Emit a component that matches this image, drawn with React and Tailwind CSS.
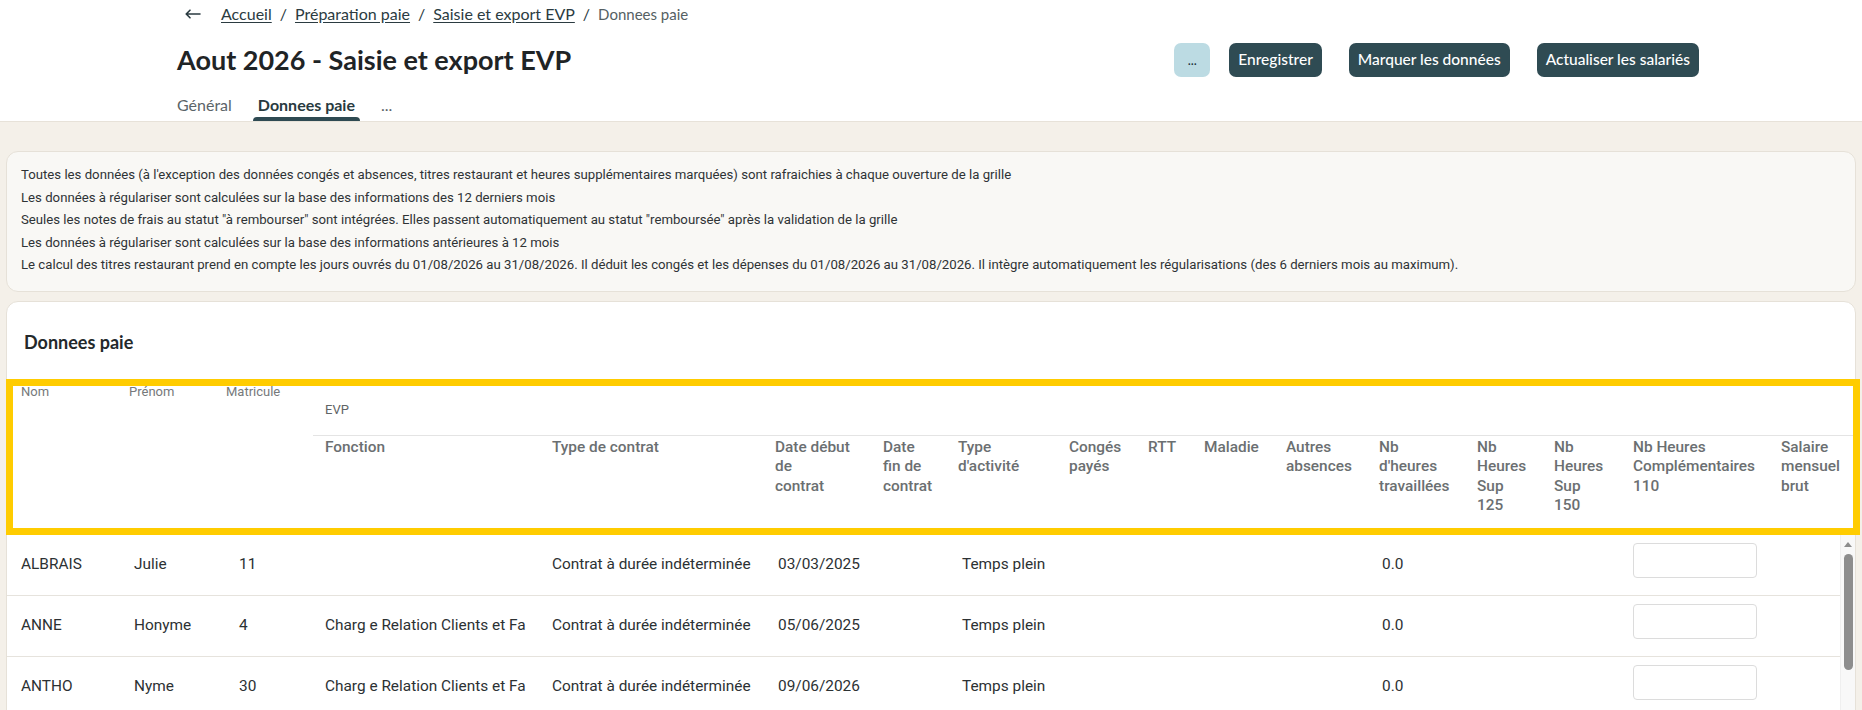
import { useState } from "react";

const infoLines = [
  "Toutes les données (à l'exception des données congés et absences, titres restaurant et heures supplémentaires marquées) sont rafraichies à chaque ouverture de la grille",
  "Les données à régulariser sont calculées sur la base des informations des 12 derniers mois",
  "Seules les notes de frais au statut \"à rembourser\" sont intégrées. Elles passent automatiquement au statut \"remboursée\" après la validation de la grille",
  "Les données à régulariser sont calculées sur la base des informations antérieures à 12 mois",
  "Le calcul des titres restaurant prend en compte les jours ouvrés du 01/08/2026 au 31/08/2026. Il déduit les congés et les dépenses du 01/08/2026 au 31/08/2026. Il intègre automatiquement les régularisations (des 6 derniers mois au maximum).",
];

// evp columns, widths taken from the grid
const evpColumns = [
  { key: "fonction", width: "w-[227px]", lines: ["Fonction"] },
  { key: "contrat", width: "w-[223px]", lines: ["Type de contrat"] },
  { key: "debut", width: "w-[108px]", lines: ["Date début", "de", "contrat"] },
  { key: "fin", width: "w-[75px]", lines: ["Date", "fin de", "contrat"] },
  { key: "activite", width: "w-[111px]", lines: ["Type", "d'activité"] },
  { key: "conges", width: "w-[79px]", lines: ["Congés", "payés"] },
  { key: "rtt", width: "w-[56px]", lines: ["RTT"] },
  { key: "maladie", width: "w-[82px]", lines: ["Maladie"] },
  { key: "autres", width: "w-[93px]", lines: ["Autres", "absences"] },
  { key: "heures", width: "w-[98px]", lines: ["Nb", "d'heures", "travaillées"] },
  { key: "sup125", width: "w-[77px]", lines: ["Nb", "Heures", "Sup", "125"] },
  { key: "sup150", width: "w-[79px]", lines: ["Nb", "Heures", "Sup", "150"] },
  { key: "compl", width: "w-[148px]", lines: ["Nb Heures", "Complémentaires", "110"] },
  { key: "salaire", width: "flex-1", lines: ["Salaire", "mensuel", "brut"] },
];

// fonction is shown cut by the column, as in the grid
const employees = [
  { nom: "ALBRAIS", prenom: "Julie", matricule: "11", fonction: "", debut: "03/03/2025" },
  { nom: "ANNE", prenom: "Honyme", matricule: "4", fonction: "Charg e Relation Clients et Fa", debut: "05/06/2025" },
  { nom: "ANTHO", prenom: "Nyme", matricule: "30", fonction: "Charg e Relation Clients et Fa", debut: "09/06/2026" },
];

function Breadcrumb() {
  return (
    <div className="flex h-[20px] items-center pl-[185px] text-[16px] leading-[20px] text-[#2b3b41]">
      <svg width="16" height="10" viewBox="0 0 16 10" fill="none" stroke="#2b3b41" strokeWidth="1.6" strokeLinecap="round" strokeLinejoin="round">
        <path d="M15 5H1.5M5 1.2L1.2 5 5 8.8" />
      </svg>
      <a className="ml-[20px] underline underline-offset-2">Accueil</a>
      <span className="mx-[8px]">/</span>
      <a className="underline underline-offset-2">Préparation paie</a>
      <span className="mx-[8px]">/</span>
      <a className="underline underline-offset-2">Saisie et export EVP</a>
      <span className="mx-[8px]">/</span>
      <span className="text-[15px] text-[#555f63]">Donnees paie</span>
    </div>
  );
}

function Tabs() {
  const [active, setActive] = useState("paie");
  const tabs = [
    { key: "general", label: "Général" },
    { key: "paie", label: "Donnees paie" },
    { key: "more", label: "..." },
  ];
  return (
    <div className="ml-[172px] mt-[17px] flex gap-[16px]">
      {tabs.map((tab) => (
        <button
          key={tab.key}
          type="button"
          onClick={() => setActive(tab.key)}
          className="flex flex-col gap-[1px]"
        >
          <span
            className={
              active === tab.key
                ? "px-[5px] text-[16px] font-bold leading-[22px] text-[#283a40]"
                : "px-[5px] text-[16px] leading-[22px] text-[#5b6468]"
            }
          >
            {tab.label}
          </span>
          <span
            className={
              active === tab.key
                ? "h-[4px] w-full rounded-t-[4px] bg-[#2e4a52]"
                : "h-[4px] w-full"
            }
          />
        </button>
      ))}
    </div>
  );
}

function PageHeader() {
  return (
    <div className="border-b border-[#e7e2d9] bg-white pt-[4px] font-['Lato',sans-serif]">
      <Breadcrumb />
      <div className="mt-[19px] flex h-[34px] items-center justify-between pl-[177px] pr-[163px]">
        <h1 className="text-[27px] font-bold leading-[34px] text-[#1f2426]">Aout 2026 - Saisie et export EVP</h1>
        <div className="flex items-center">
          <button type="button" className="h-[34px] w-[36px] rounded-[7px] bg-[#bcdbe3] text-[13px] leading-none text-[#203036]">
            ...
          </button>
          <button type="button" className="ml-[19px] h-[34px] rounded-[7px] bg-[#2f4b53] px-[9px] text-[15.5px] font-medium text-white">
            Enregistrer
          </button>
          <button type="button" className="ml-[27px] h-[34px] rounded-[7px] bg-[#2f4b53] px-[9px] text-[15.5px] font-medium text-white">
            Marquer les données
          </button>
          <button type="button" className="ml-[27px] h-[34px] rounded-[7px] bg-[#2f4b53] px-[9px] text-[15.5px] font-medium text-white">
            Actualiser les salariés
          </button>
        </div>
      </div>
      <Tabs />
    </div>
  );
}

function InfoBox() {
  return (
    <div className="rounded-[12px] border border-[#e6e1d8] bg-[#f9f8f5] pb-[14px] pl-[14px] pt-[12px] font-['Roboto',sans-serif] text-[13.2px] leading-[22.5px] text-[#2f3335]">
      {infoLines.map((line) => (
        <p key={line}>{line}</p>
      ))}
    </div>
  );
}

function TableHeader() {
  return (
    <div className="relative flex h-[156px]">
      <div className="w-[106px] pl-[14px] pt-[5px] text-[13px] leading-[16px] text-[#76797b]">Nom</div>
      <div className="w-[97px] pl-[16px] pt-[5px] text-[13px] leading-[16px] text-[#76797b]">Prénom</div>
      <div className="w-[103px] pl-[16px] pt-[5px] text-[13px] leading-[16px] text-[#76797b]">Matricule</div>
      <div className="flex flex-1 flex-col">
        <div className="h-[57px] border-b border-[#e4e4e4] pl-[12px] pt-[23px] text-[13px] leading-[16px] text-[#5f6466]">EVP</div>
        <div className="flex">
          {evpColumns.map((col) => (
            <div key={col.key} className={`${col.width} px-[12px] pt-[2px] text-[15.4px] font-medium leading-[19.5px] text-[#6b6f71]`}>
              {col.lines.map((line) => (
                <div key={line} className="whitespace-nowrap">
                  {line}
                </div>
              ))}
            </div>
          ))}
        </div>
      </div>
      <div className="pointer-events-none absolute bottom-0 left-[-1px] right-[-5px] top-0 border-[7px] border-[#ffcc00]" />
    </div>
  );
}

function Row({ emp }) {
  return (
    <div className="flex h-[61px] items-center border-b border-[#e6e3dd] text-[15.4px] text-[#2c3133]">
      <div className="w-[106px] pl-[14px]">{emp.nom}</div>
      <div className="w-[97px] pl-[21px]">{emp.prenom}</div>
      <div className="w-[103px] pl-[29px]">{emp.matricule}</div>
      <div className="w-[227px] whitespace-nowrap pl-[12px]">{emp.fonction}</div>
      <div className="w-[223px] whitespace-nowrap pl-[12px]">Contrat à durée indéterminée</div>
      <div className="w-[108px] pl-[15px]">{emp.debut}</div>
      <div className="w-[75px]" />
      <div className="w-[111px] whitespace-nowrap pl-[16px]">Temps plein</div>
      <div className="w-[79px]" />
      <div className="w-[56px]" />
      <div className="w-[82px]" />
      <div className="w-[93px]" />
      <div className="w-[98px] pl-[15px]">0.0</div>
      <div className="w-[77px]" />
      <div className="w-[79px]" />
      <div className="w-[148px] self-start pl-[12px] pt-[8px]">
        <input
          type="text"
          className="h-[35px] w-[124px] rounded-[4px] border border-[#dcdcdc] bg-white outline-none"
        />
      </div>
      <div className="flex-1" />
    </div>
  );
}

function Scrollbar() {
  return (
    <div className="flex w-[15px] flex-col items-center border-l border-[#efefef] bg-[#f8f8f8] pt-[7px]">
      <div className="h-0 w-0 border-x-[4.5px] border-b-[5px] border-x-transparent border-b-[#8d8d8d]" />
      <div className="mt-[7px] h-[116px] w-[9px] rounded-full bg-[#8d8d8d]" />
    </div>
  );
}

function PayGrid() {
  return (
    <div className="mt-[9px] rounded-t-[12px] border border-[#e6e1d8] bg-white pt-[28px] font-['Roboto',sans-serif]">
      <h2 className="h-[24px] pl-[17px] font-['Lato',sans-serif] text-[18px] font-bold leading-[24px] text-[#24292b]">
        Donnees paie
      </h2>
      <div className="mt-[25px]">
        <TableHeader />
        <div className="flex">
          <div className="flex-1">
            {employees.map((emp) => (
              <Row key={emp.nom} emp={emp} />
            ))}
          </div>
          <Scrollbar />
        </div>
      </div>
    </div>
  );
}

export default function App() {
  return (
    <div className="h-screen overflow-hidden bg-[#f4f0e9]">
      <PageHeader />
      <div className="px-[6px] pt-[29px]">
        <InfoBox />
        <PayGrid />
      </div>
    </div>
  );
}
